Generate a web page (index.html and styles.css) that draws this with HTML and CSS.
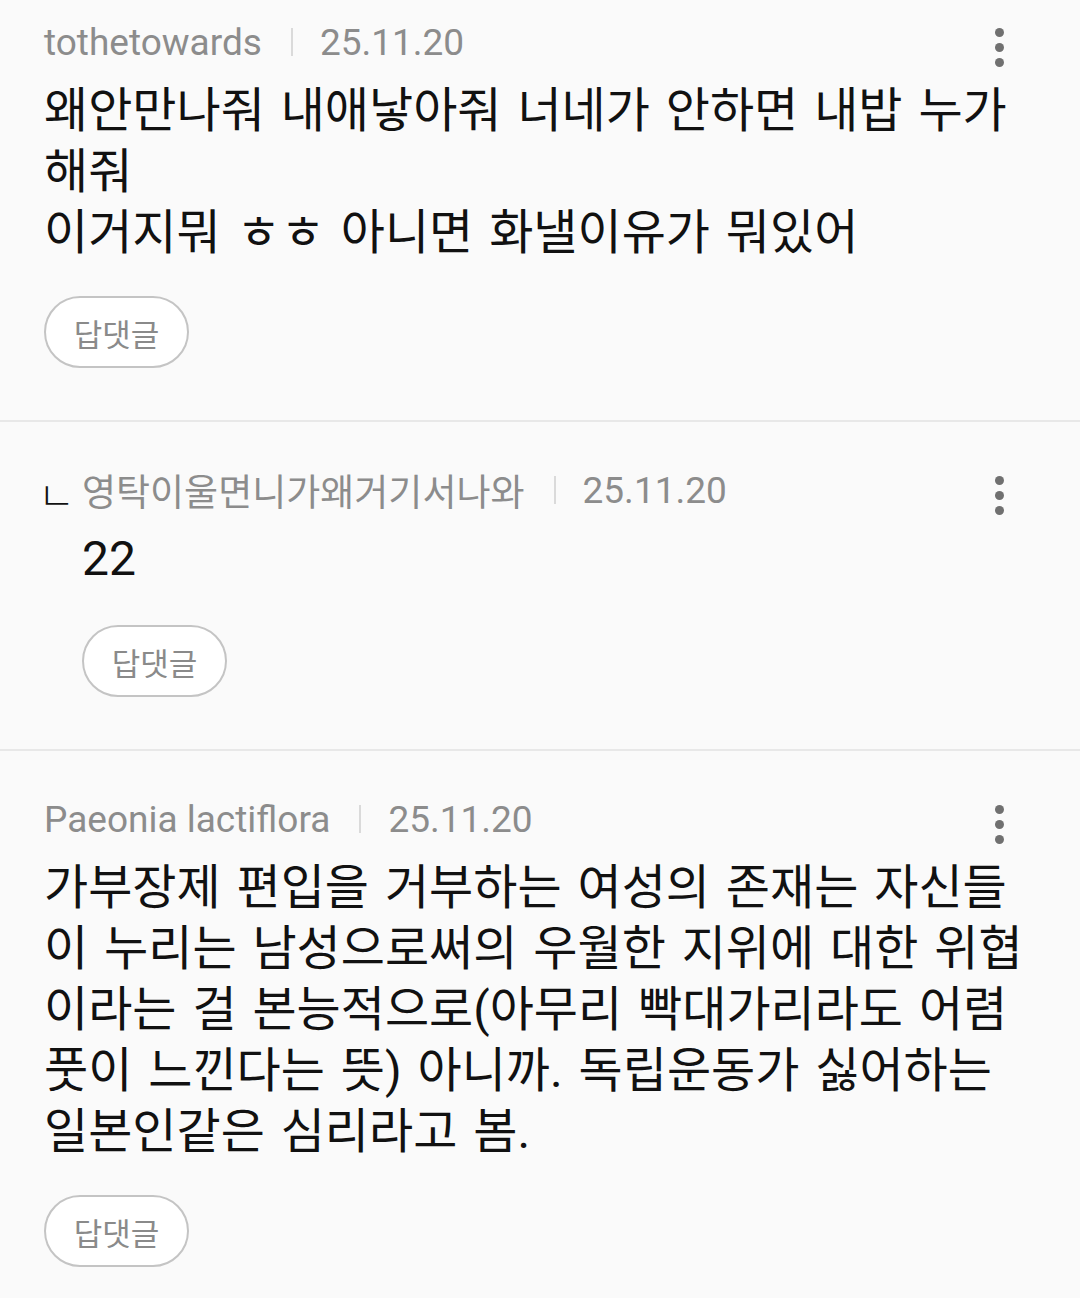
FILE: index.html
```html
<!DOCTYPE html>
<html lang="ko">
<head>
<meta charset="utf-8">
<title>댓글</title>
<link rel="stylesheet" href="styles.css">
</head>
<body>
<main class="comments">
  <article class="comment comment--first">
    <header class="comment-head">
      <span class="author">tothetowards</span>
      <span class="sep"></span>
      <time class="date">25.11.20</time>
      <button class="more" aria-label="더보기"><span class="dot"></span><span class="dot"></span><span class="dot"></span></button>
    </header>
    <p class="comment-body">왜안만나줘 내애낳아줘 너네가 안하면 내밥 누가 해줘<br>이거지뭐 ㅎㅎ 아니면 화낼이유가 뭐있어</p>
    <button class="reply-btn">답댓글</button>
  </article>

  <article class="comment comment--reply">
    <header class="comment-head">
      <span class="reply-mark">ㄴ</span>
      <span class="author">영탁이울면니가왜거기서나와</span>
      <span class="sep"></span>
      <time class="date">25.11.20</time>
      <button class="more" aria-label="더보기"><span class="dot"></span><span class="dot"></span><span class="dot"></span></button>
    </header>
    <div class="reply-content">
      <p class="comment-body">22</p>
      <button class="reply-btn">답댓글</button>
    </div>
  </article>

  <article class="comment">
    <header class="comment-head">
      <span class="author">Paeonia lactiflora</span>
      <span class="sep"></span>
      <time class="date">25.11.20</time>
      <button class="more" aria-label="더보기"><span class="dot"></span><span class="dot"></span><span class="dot"></span></button>
    </header>
    <p class="comment-body">가부장제 편입을 거부하는 여성의 존재는 자신들이 누리는 남성으로써의 우월한 지위에 대한 위협이라는 걸 본능적으로(아무리 빡대가리라도 어렴풋이 느낀다는 뜻) 아니까. 독립운동가 싫어하는 일본인같은 심리라고 봄.</p>
    <button class="reply-btn">답댓글</button>
  </article>
</main>
</body>
</html>
```

FILE: styles.css
```css
html, body {
  margin: 0;
  padding: 0;
  background: #fafafa;
}

body {
  width: 1080px;
  font-family: Roboto, "Noto Sans CJK KR", sans-serif;
  color: #111;
}

.comments {
  display: flex;
  flex-direction: column;
}

.comment {
  display: flex;
  flex-direction: column;
  align-items: flex-start;
  padding: 42px 44px 52px 44px;
  border-bottom: 2px solid #e8e8e8;
}

.comment--first {
  padding-top: 16px;
}

.comment:last-child {
  border-bottom: none;
}

.comment-head {
  align-self: stretch;
  display: flex;
  align-items: center;
  height: 52px;
  color: #8c8c8c;
  font-size: 37px;
}

.author {
  white-space: nowrap;
}

.reply-mark {
  width: 38px;
  font-family: "Noto Sans CJK KR", sans-serif;
  font-size: 40px;
  font-weight: 300;
  color: #111;
  line-height: 1;
  margin-top: 5px;
  margin-left: -6px;
  margin-right: 6px;
}

.sep {
  width: 2px;
  height: 28px;
  background: #dadada;
  margin: 0 27px 0 29px;
}

.date {
  white-space: nowrap;
}

.more {
  margin-left: auto;
  margin-right: 32px;
  margin-top: 10px;
  padding: 0;
  border: none;
  background: none;
  display: flex;
  flex-direction: column;
  gap: 6px;
}

.dot {
  width: 9px;
  height: 9px;
  border-radius: 50%;
  background: #707070;
}

.comment-body {
  margin: 12px 0 0 0;
  font-size: 48px;
  line-height: 61px;
  word-spacing: 4px;
  color: #111;
  align-self: stretch;
}

.reply-content {
  display: flex;
  flex-direction: column;
  align-items: flex-start;
  padding-left: 38px;
  align-self: stretch;
}

.reply-btn {
  margin-top: 33px;
  width: 145px;
  height: 72px;
  border: 2px solid #c4c4c4;
  border-radius: 36px;
  background: #fff;
  color: #8a8a8a;
  font-family: "Noto Sans CJK KR", sans-serif;
  font-size: 31px;
  padding: 0;
  display: flex;
  align-items: center;
  justify-content: center;
}

.reply-content .reply-btn {
  margin-top: 36px;
}
```
